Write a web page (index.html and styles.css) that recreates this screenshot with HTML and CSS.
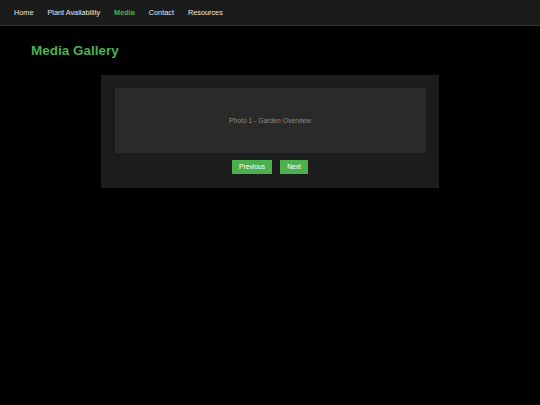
FILE: index.html
```html
<!DOCTYPE html>
<html lang="en">
<head>
<meta charset="utf-8">
<title>Media Gallery</title>
<link rel="stylesheet" href="styles.css">
</head>
<body>
<nav class="topnav">
  <a class="nav-link" href="#">Home</a>
  <a class="nav-link" href="#">Plant Availability</a>
  <a class="nav-link active" href="#">Media</a>
  <a class="nav-link" href="#">Contact</a>
  <a class="nav-link" href="#">Resources</a>
</nav>
<main class="content">
  <h1 class="page-title">Media Gallery</h1>
  <section class="gallery">
    <div class="photo">Photo 1 - Garden Overview</div>
    <div class="controls">
      <button class="btn">Previous</button>
      <button class="btn">Next</button>
    </div>
  </section>
</main>
</body>
</html>
```

FILE: styles.css
```css
html, body {
  margin: 0;
  padding: 0;
  background: #000;
  font-family: "Liberation Sans", Arial, sans-serif;
  color: #ddd;
}

.topnav {
  height: 25px;
  background: #1b1b1b;
  border-bottom: 1px solid #333;
  display: flex;
  align-items: center;
  padding-left: 7px;
}

.nav-link {
  color: #e6e6e6;
  text-decoration: none;
  font-size: 7.3px;
  padding: 0 7px;
}

.nav-link.active {
  color: #4caf50;
  font-weight: bold;
}

.content {
  padding: 17px 31px 0;
}

.page-title {
  margin: 0 0 16px;
  font-size: 13.5px;
  line-height: 15.5px;
  color: #4caf50;
  font-weight: bold;
}

.gallery {
  width: 311px;
  margin: 0 auto;
  padding: 13px 13.5px 14px;
  background: #1c1c1c;
}

.photo {
  height: 65px;
  background: #2a2a2a;
  color: #8a8a8a;
  font-size: 6.75px;
  display: flex;
  align-items: center;
  justify-content: center;
}

.controls {
  margin-top: 7px;
  display: flex;
  justify-content: center;
  gap: 8px;
}

.btn {
  height: 14px;
  padding: 0 7px;
  border: none;
  background: #4caf50;
  color: #fff;
  font-family: "Liberation Sans", Arial, sans-serif;
  font-size: 6.7px;
  cursor: pointer;
}
```
